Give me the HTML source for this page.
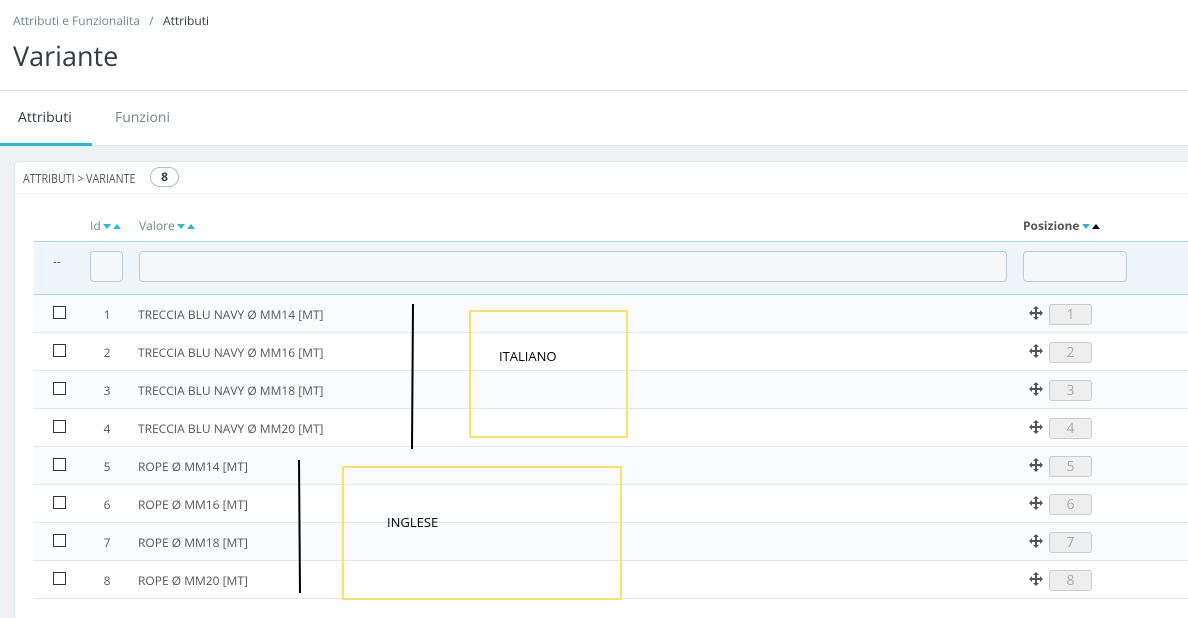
<!DOCTYPE html>
<html style="width:1188px;height:618px;overflow:hidden"><head><style>
*{box-sizing:border-box;margin:0;padding:0}
body{width:1188px;height:618px;overflow:hidden;background:#eff1f2;font-family:"Open Sans","Liberation Sans",sans-serif;color:#363a41;position:relative}
.abs{position:absolute}
.hdr{left:0;top:0;width:1188px;height:146px;background:#fff}
.tabs{left:0;top:90px;width:1188px;height:56px;border-top:1px solid #dfe3e6;border-bottom:1px solid #dfe3e6;background:#fff}
.panel{left:14px;top:161px;width:1180px;height:457px;background:#fff;border:1px solid #dbe6e9;border-bottom:none;border-radius:5px 5px 0 0}
.row{left:34px;width:1154px;height:38px;border-bottom:1px solid #e4e8ea;font-size:12px;color:#555}
.cb{position:absolute;left:19px;top:11px;width:13px;height:13px;border:1px solid #333;background:#fff}
.id{position:absolute;left:68px;top:11px;width:10px;text-align:center}
.val{position:absolute;left:104px;top:11px}
.mv{position:absolute;left:995px;top:11px}
.pos{position:absolute;left:1015px;top:9px;width:43px;height:21px;background:#eee;border:1px solid #ccc;border-radius:3px;color:#aaa;font-size:14px;text-align:center;line-height:19px}
.inp{position:absolute;top:251px;height:31px;background:#f5f8f9;border:1px solid #bbcdd2;border-radius:4px}
.ar{display:inline-block;vertical-align:middle;margin-left:2px}
</style></head><body>
<div class="abs hdr"></div>
<div class="abs" style="left:13px;top:12px;font-size:12px;color:#6c868e">Attributi e Funzionalita &nbsp;&nbsp;/&nbsp;&nbsp; <span style="color:#363a41">Attributi</span></div>
<div class="abs" style="left:13px;top:37px;font-size:27px;color:#363a41">Variante</div>
<div class="abs tabs"></div>
<div class="abs" style="left:0;top:90px;width:92px;height:56px;border-bottom:3px solid #25b9d7"></div>
<div class="abs" style="left:18px;top:108px;font-size:14px;color:#363a41">Attributi</div>
<div class="abs" style="left:115px;top:108px;font-size:14px;color:#6c868e">Funzioni</div>
<div class="abs panel"></div>
<div class="abs" style="left:23px;top:169px;font-size:13px;color:#555;transform:scaleX(0.82);transform-origin:0 0;white-space:nowrap">ATTRIBUTI &gt; VARIANTE</div>
<div class="abs" style="left:150px;top:167px;width:29px;height:20px;border:1px solid #bbb;border-radius:10px;font-size:12px;font-weight:bold;text-align:center;line-height:18px;color:#363a41">8</div>
<div class="abs" style="left:18px;top:193px;width:1170px;border-top:1px solid #eef1f2"></div>
<svg width="0" height="0" style="position:absolute"><defs>
<g id="arr"><path d="M0 0h8l-4 5z" fill="#25b9d7"/><path d="M10 5h8l-4-5z" fill="#25b9d7"/></g></defs></svg>
<div class="abs" style="left:90px;top:217px;font-size:12px;color:#6c868e">Id<svg class="ar" width="18" height="6"><use href="#arr"/></svg></div>
<div class="abs" style="left:139px;top:217px;font-size:12px;color:#6c868e">Valore<svg class="ar" width="18" height="6"><use href="#arr"/></svg></div>
<div class="abs" style="left:1023px;top:217px;font-size:12px;color:#555;font-weight:bold">Posizione<svg class="ar" width="18" height="6"><path d="M0 0h8l-4 5z" fill="#25b9d7"/><path d="M10 5h8l-4-5z" fill="#000"/></svg></div>
<div class="abs" style="left:34px;top:241px;width:1154px;height:54px;background:#eef5fb;border-top:1px solid #a8d6ec;border-bottom:1px solid #a8d6ec"></div>
<div class="abs" style="left:53px;top:253px;font-size:12px;color:#555">--</div>
<div class="inp" style="left:90px;width:33px"></div>
<div class="inp" style="left:139px;width:868px"></div>
<div class="inp" style="left:1023px;width:104px"></div>

<svg width="0" height="0" style="position:absolute"><defs><g id="mv"><path d="M7 0l3 3H8v3h3V4l3 3-3 3V8H8v3h2l-3 3-3-3h2V8H3v2L0 7l3-3v2h3V3H4z" fill="#555"/></g></defs></svg>
<div class="abs row" style="top:295px;background:#fafbfc"><div class="cb"></div><div class="id">1</div><div class="val">TRECCIA BLU NAVY Ø MM14 [MT]</div><svg class="mv" width="14" height="14"><use href="#mv"/></svg><div class="pos">1</div></div>
<div class="abs row" style="top:333px"><div class="cb"></div><div class="id">2</div><div class="val">TRECCIA BLU NAVY Ø MM16 [MT]</div><svg class="mv" width="14" height="14"><use href="#mv"/></svg><div class="pos">2</div></div>
<div class="abs row" style="top:371px;background:#fafbfc"><div class="cb"></div><div class="id">3</div><div class="val">TRECCIA BLU NAVY Ø MM18 [MT]</div><svg class="mv" width="14" height="14"><use href="#mv"/></svg><div class="pos">3</div></div>
<div class="abs row" style="top:409px"><div class="cb"></div><div class="id">4</div><div class="val">TRECCIA BLU NAVY Ø MM20 [MT]</div><svg class="mv" width="14" height="14"><use href="#mv"/></svg><div class="pos">4</div></div>
<div class="abs row" style="top:447px;background:#fafbfc"><div class="cb"></div><div class="id">5</div><div class="val">ROPE Ø MM14 [MT]</div><svg class="mv" width="14" height="14"><use href="#mv"/></svg><div class="pos">5</div></div>
<div class="abs row" style="top:485px"><div class="cb"></div><div class="id">6</div><div class="val">ROPE Ø MM16 [MT]</div><svg class="mv" width="14" height="14"><use href="#mv"/></svg><div class="pos">6</div></div>
<div class="abs row" style="top:523px;background:#fafbfc"><div class="cb"></div><div class="id">7</div><div class="val">ROPE Ø MM18 [MT]</div><svg class="mv" width="14" height="14"><use href="#mv"/></svg><div class="pos">7</div></div>
<div class="abs row" style="top:561px"><div class="cb"></div><div class="id">8</div><div class="val">ROPE Ø MM20 [MT]</div><svg class="mv" width="14" height="14"><use href="#mv"/></svg><div class="pos">8</div></div>

<svg class="abs" style="left:0;top:0" width="1188" height="618">
<path d="M413 304 L412 449" stroke="#000" stroke-width="2" fill="none"/>
<path d="M299 460 L300 593" stroke="#000" stroke-width="2" fill="none"/>
<rect x="470" y="311" width="157" height="126" fill="none" stroke="#ffe066" stroke-width="2"/>
<rect x="343" y="467" width="278" height="132" fill="none" stroke="#ffe066" stroke-width="2"/>
</svg>
<div class="abs" style="left:499px;top:347px;font-size:13px;color:#000">ITALIANO</div>
<div class="abs" style="left:387px;top:513px;font-size:13px;color:#000">INGLESE</div>
</body></html>
